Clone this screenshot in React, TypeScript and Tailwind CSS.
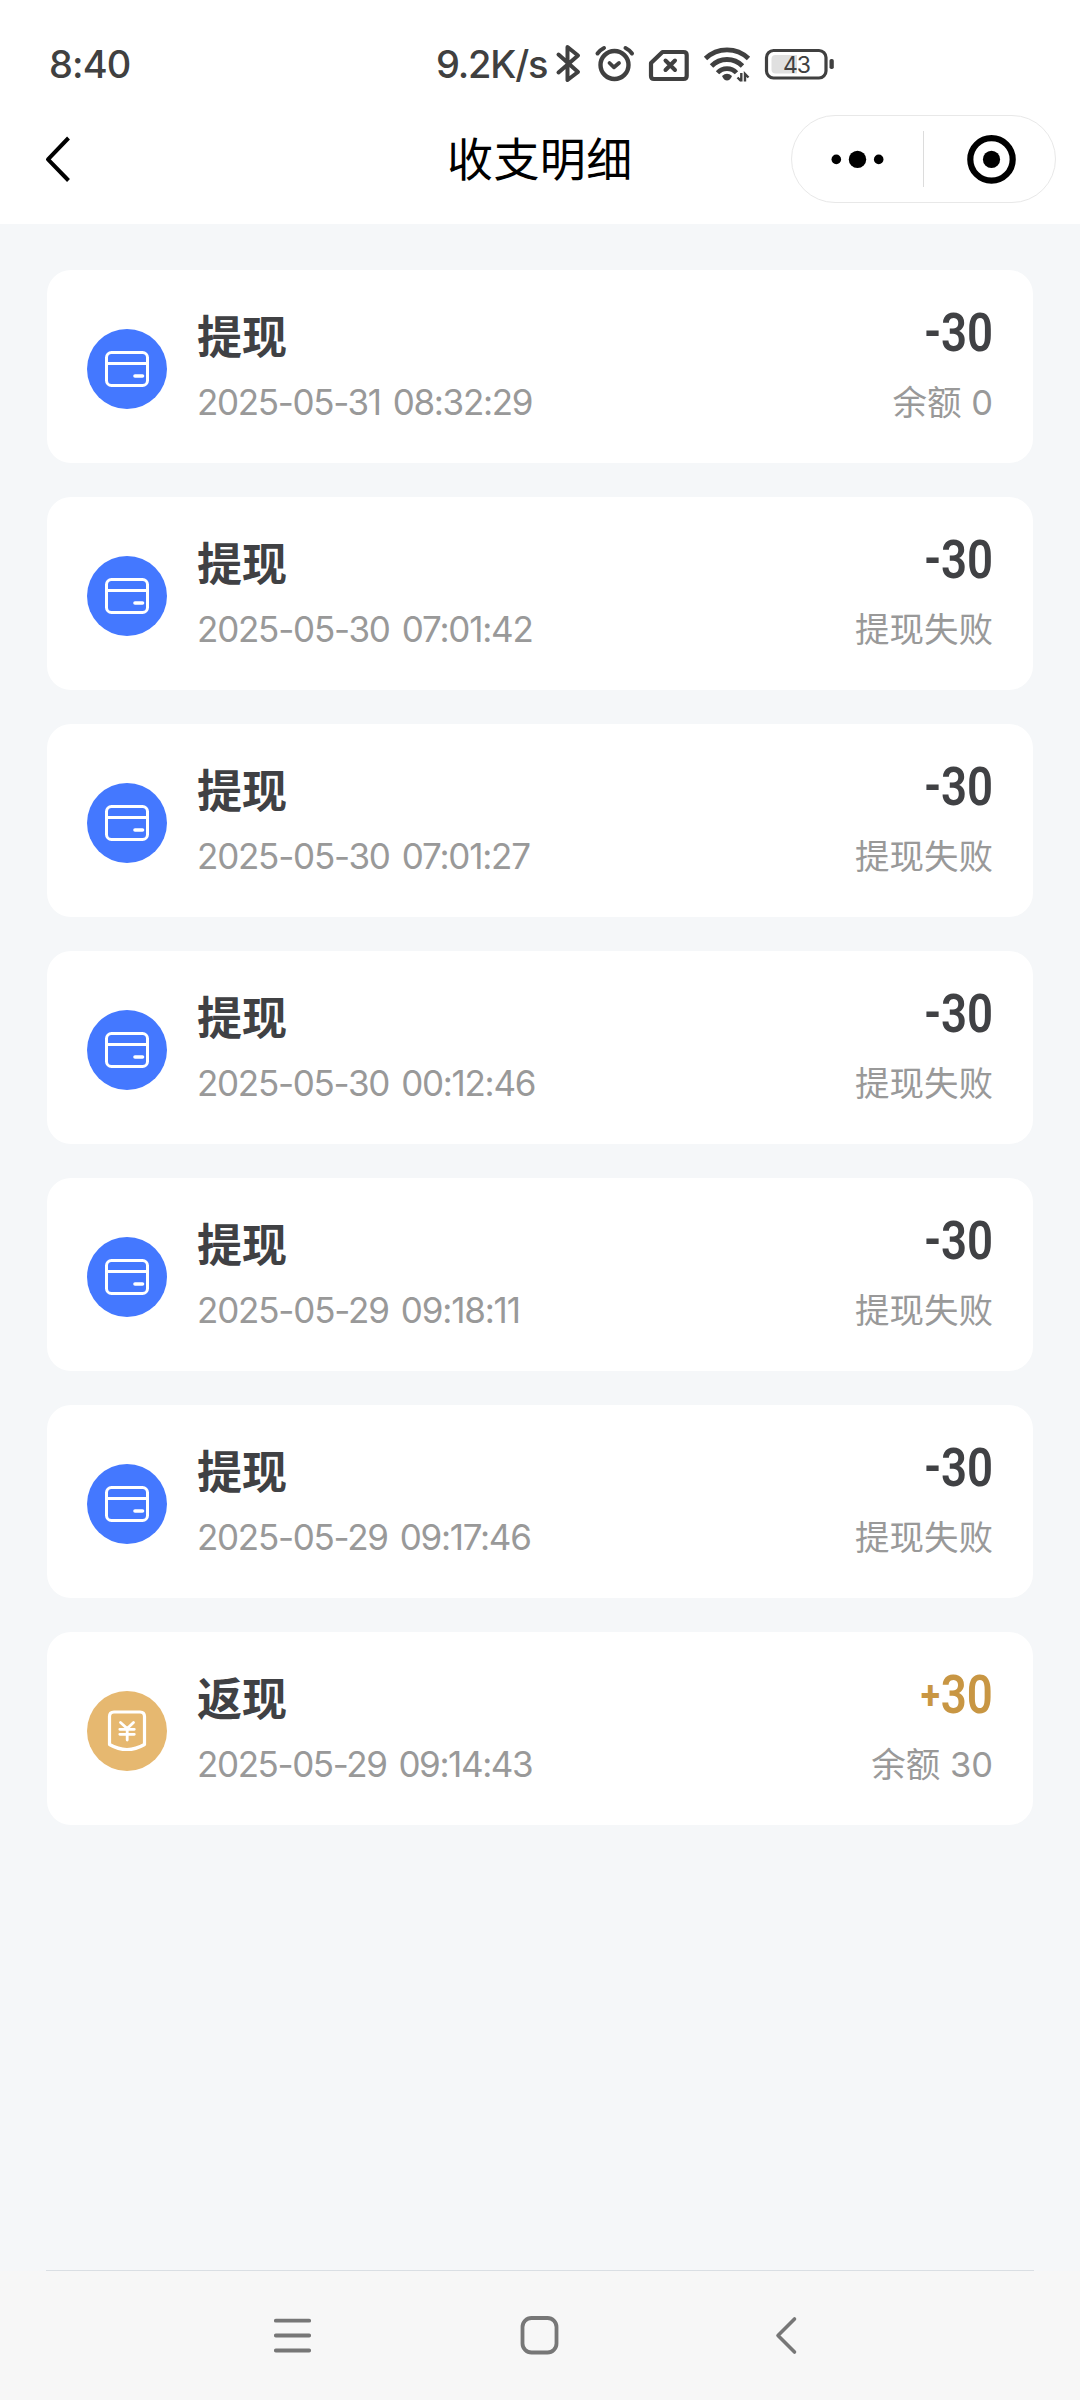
type Row = {
  kind: "withdraw" | "cashback";
  time: string;
  sign: string;
  amount: string;
  note: string;
  tracking: string;
};

const rows: Row[] = [
  { kind: "withdraw", time: "2025-05-31 08:32:29", sign: "-", amount: "30", note: "余额 0", tracking: "tracking-[-1.33px]" },
  { kind: "withdraw", time: "2025-05-30 07:01:42", sign: "-", amount: "30", note: "提现失败", tracking: "tracking-[-1.22px]" },
  { kind: "withdraw", time: "2025-05-30 07:01:27", sign: "-", amount: "30", note: "提现失败", tracking: "tracking-[-1.22px]" },
  { kind: "withdraw", time: "2025-05-30 00:12:46", sign: "-", amount: "30", note: "提现失败", tracking: "tracking-[-1.28px]" },
  { kind: "withdraw", time: "2025-05-29 09:18:11", sign: "-", amount: "30", note: "提现失败", tracking: "tracking-[-1.18px]" },
  { kind: "withdraw", time: "2025-05-29 09:17:46", sign: "-", amount: "30", note: "提现失败", tracking: "tracking-[-1.28px]" },
  { kind: "cashback", time: "2025-05-29 09:14:43", sign: "+", amount: "30", note: "余额 30", tracking: "tracking-[-1.4px]" },
];

function StatusIcons() {
  return (
    <svg width="290" height="50" viewBox="548 40 290 50" fill="none" stroke="#404040" className="block shrink-0">
      {/* bluetooth */}
      <path d="M558.500 54.500 L578 72 L567.500 80 V47 L578 55.500 L558.500 72.500" strokeWidth="4" strokeLinejoin="round" strokeLinecap="round" />
      {/* alarm */}
      <circle cx="614.500" cy="65" r="14" strokeWidth="4.400" />
      <path d="M609.500 63 L614 67.300 L619 63" strokeWidth="3.800" strokeLinecap="round" strokeLinejoin="round" />
      <path d="M597.500 53.500 Q600 50 604 48 M625.500 48 Q629.500 50 632 53.500" strokeWidth="4" strokeLinecap="round" />
      {/* sim */}
      <path d="M662.500 52 H683.500 Q686.700 52 686.700 55 V76 Q686.700 79 683.500 79 H654 Q651 79 651 76 V63 Z" strokeWidth="4.200" strokeLinejoin="round" />
      <path d="M665.500 60.500 L675 70 M675 60.500 L665.500 70" strokeWidth="4" strokeLinecap="round" />
      {/* wifi */}
      <path d="M705.500 58.500 A31 31 0 0 1 748.500 58.500" strokeWidth="4.800" />
      <path d="M711.500 66 A21.700 21.700 0 0 1 742.500 66" strokeWidth="4.800" />
      <path d="M717.500 72.800 A13 13 0 0 1 736.500 72.800" strokeWidth="4.600" />
      <path d="M722 76 Q727 71.500 732 76 Q730 80.500 727 80.500 Q724 80.500 722 76 Z" fill="#404040" stroke="none" />
      <path d="M741.300 73 V81.500 M737.500 77.500 L741 81 M745 81.500 V74 L748.500 77.500" strokeWidth="2.400" />
      {/* battery */}
      <rect x="766.500" y="50.500" width="59.500" height="27.500" rx="7" strokeWidth="3.200" />
      <path d="M775.500 55 H797 V73.500 H775.500 Q771.500 73.500 771.500 69.500 V59 Q771.500 55 775.500 55 Z" fill="#e0e0e0" stroke="none" />
      <rect x="829.500" y="59" width="4.300" height="10" rx="1.800" fill="#404040" stroke="none" />
      <text x="796.500" y="72.700" textAnchor="middle" fontSize="23" fontFamily="Inter, sans-serif" fontWeight="400" letterSpacing="-1" fill="#404040" stroke="none">43</text>
    </svg>
  );
}

function StatusBar() {
  return (
    <div className="flex h-[100px] items-start pt-[40px] text-[#404040]">
      <div className="ml-[49px] w-[387px] text-[38px] leading-[48px] font-medium tracking-[-0.9px] whitespace-nowrap">8:40</div>
      <div className="w-[112px] text-[38px] leading-[48px] font-medium tracking-[-1.2px] whitespace-nowrap">9.2K/s</div>
      <StatusIcons />
    </div>
  );
}

function TitleBar() {
  return (
    <div className="flex h-[124px] items-start justify-between">
      <svg width="60" height="60" viewBox="0 0 60 60" fill="none" className="mt-[29px] ml-[30px] block">
        <path d="M38.500 9 L18 30.300 L38.500 51.500" stroke="#000" strokeWidth="4" strokeLinejoin="round" />
      </svg>
      <h1 className="mt-[24px] ml-[357px] w-[190px] text-[46px] leading-[70px] font-normal tracking-[0.4px] text-black whitespace-nowrap">收支明细</h1>
      <div className="mt-[15px] mr-[24px] ml-auto flex h-[88px] w-[265px] items-center rounded-full border-[1.500px] border-[#e8e8e8]">
        <svg width="131" height="60" viewBox="0 0 131 60" className="block">
          <circle cx="44.300" cy="30.400" r="4.800" />
          <circle cx="65.500" cy="30.400" r="8.700" />
          <circle cx="86.700" cy="30.400" r="4.800" />
        </svg>
        <div className="h-[56px] w-px bg-[#dcdcdc]" />
        <svg width="130" height="60" viewBox="0 0 130 60" className="block">
          <circle cx="67.500" cy="30.400" r="21.200" fill="none" stroke="#000" strokeWidth="6.200" />
          <circle cx="67.500" cy="30.400" r="8.600" />
        </svg>
      </div>
    </div>
  );
}

function CardIcon() {
  return (
    <svg width="80" height="80" viewBox="0 0 80 80" fill="none" stroke="#fff" className="mt-[59px] block shrink-0">
      <circle cx="40" cy="40" r="40" fill="#4478ff" stroke="none" />
      <rect x="19.500" y="23.500" width="41" height="33" rx="5" strokeWidth="3" />
      <path d="M19.500 34.500 H60.500" strokeWidth="3" />
      <path d="M48 47 H55.500" strokeWidth="3.600" strokeLinecap="round" />
    </svg>
  );
}

function CashIcon() {
  return (
    <svg width="80" height="80" viewBox="0 0 80 80" fill="none" stroke="#fff" className="mt-[59px] block shrink-0">
      <circle cx="40" cy="40" r="40" fill="#e6b870" stroke="none" />
      <path d="M27 21 H53 Q57.500 21 57.500 25.500 V53.500 Q40 63.500 22.500 53.500 V25.500 Q22.500 21 27 21 Z" strokeWidth="3.200" strokeLinejoin="round" />
      <path d="M33.500 31.500 L40.200 37.500 L46.500 31.500 M32.800 38.300 H47.300 M32.800 43.300 H47.300 M40.200 37.500 V49" strokeWidth="2.800" strokeLinecap="round" />
    </svg>
  );
}

function RecordCard({ row }: { row: Row }) {
  const cash = row.kind === "cashback";
  return (
    <li className="flex h-[193px] items-start rounded-[24px] bg-white px-[40px]">
      {cash ? <CashIcon /> : <CardIcon />}
      <div className="ml-[30px] flex-1">
        <div className="mt-[35px] text-[45px] leading-[66px] font-bold text-[#404144]">{cash ? "返现" : "提现"}</div>
        <div className={"mt-[6px] text-[35px] leading-[50px] whitespace-nowrap text-[#999] [word-spacing:3.500px] " + row.tracking}>{row.time}</div>
      </div>
      <div className="flex flex-col items-end">
        <div className={"mt-[33px] flex h-[60px] origin-right scale-x-[0.86] font-[Roboto] text-[53px] leading-[60px] font-semibold " + (cash ? "text-[#c89643]" : "text-[#404144]")}>
          <span className={cash ? "pr-px text-[41px] leading-[61px] font-bold" : "leading-[58px]"}>{row.sign}</span>
          <span>{row.amount}</span>
        </div>
        <div className="mt-[15px] text-[34.5px] leading-[50px] whitespace-nowrap text-[#999]">{row.note}</div>
      </div>
    </li>
  );
}

function NavBar() {
  return (
    <div className="flex h-[129px] items-start bg-[#f7f7f7] pt-[40px]">
      <svg width="50" height="50" viewBox="0 0 50 50" stroke="#777" strokeWidth="3.800" strokeLinecap="round" className="ml-[268px] block">
        <path d="M7.800 9.700 H41.200 M7.800 24.500 H41.200 M7.800 39.500 H41.200" />
      </svg>
      <svg width="50" height="50" viewBox="0 0 50 50" fill="none" stroke="#777" strokeWidth="3.800" className="ml-[197px] block">
        <rect x="7.500" y="7" width="34" height="34.500" rx="9" />
      </svg>
      <svg width="50" height="50" viewBox="0 0 50 50" fill="none" stroke="#777" strokeWidth="3.600" strokeLinecap="round" strokeLinejoin="round" className="ml-[197px] block">
        <path d="M32.500 8 L16 24.500 L32.500 41" />
      </svg>
    </div>
  );
}

export default function App() {
  return (
    <div className="flex h-[2400px] w-[1080px] flex-col overflow-hidden bg-[#f5f7f9] font-[Inter,'Noto_Sans_CJK_SC',sans-serif]">
      <header className="h-[224px] shrink-0 bg-white">
        <StatusBar />
        <TitleBar />
      </header>
      <main className="flex-1 px-[47px] pt-[46px]">
        <ul className="flex flex-col gap-[34px]">
          {rows.map((row) => (
            <RecordCard key={row.time} row={row} />
          ))}
        </ul>
      </main>
      <div className="mx-[46px] h-px shrink-0 bg-[#dadfe4]" />
      <NavBar />
    </div>
  );
}
